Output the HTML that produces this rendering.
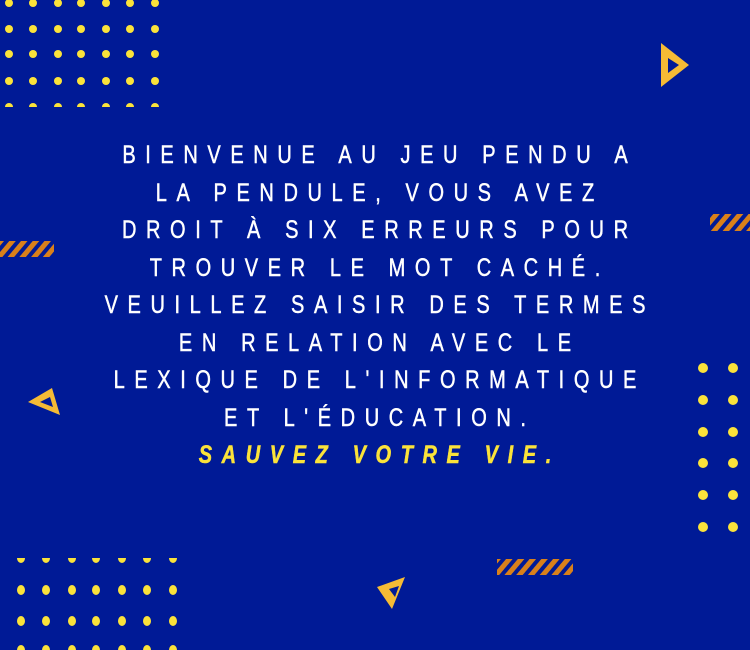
<!DOCTYPE html>
<html><head><meta charset="utf-8"><style>
html,body{margin:0;padding:0}
body{width:750px;height:650px;background:#001a96;position:relative;overflow:hidden}
svg{position:absolute;left:0;top:0}
.t{position:absolute;left:0;width:750px;color:#fff;font-family:"Liberation Sans",sans-serif;font-size:25px;letter-spacing:12px;line-height:37.5px;top:137px;white-space:nowrap;-webkit-text-stroke:0.5px currentColor}
.t div{height:37.5px;text-align:center;padding-left:12px;box-sizing:border-box;width:750px;transform:scaleX(0.8);transform-origin:375px 50%}
.y{color:#fbe33a;font-style:italic;font-weight:bold}
</style></head><body>
<svg width="750" height="650" viewBox="0 0 750 650">
<defs>
<pattern id="st" width="9" height="9" patternUnits="userSpaceOnUse" patternTransform="rotate(40)">
<rect width="9" height="9" fill="#001a96"/><rect width="5" height="9" fill="#d9801a"/>
</pattern>
<clipPath id="c1"><rect x="0" y="0" width="200" height="107"/></clipPath>
<clipPath id="c2"><rect x="0" y="558" width="220" height="100"/></clipPath>
</defs>
<g fill="#fbe33a" clip-path="url(#c1)">
<g id="r1"><circle cx="9" cy="3" r="4"/><circle cx="33" cy="3" r="4"/><circle cx="58" cy="3" r="4"/><circle cx="81" cy="3" r="4"/><circle cx="106" cy="3" r="4"/><circle cx="130" cy="3" r="4"/><circle cx="155" cy="3" r="4"/></g>
<use href="#r1" y="26"/><use href="#r1" y="51"/><use href="#r1" y="78"/><use href="#r1" y="104"/>
</g>
<g fill="#fbe33a" clip-path="url(#c2)">
<g id="r2"><ellipse cx="21" cy="558" rx="4" ry="5"/><ellipse cx="46" cy="558" rx="4" ry="5"/><ellipse cx="72" cy="558" rx="4" ry="5"/><ellipse cx="96" cy="558" rx="4" ry="5"/><ellipse cx="122" cy="558" rx="4" ry="5"/><ellipse cx="147" cy="558" rx="4" ry="5"/><ellipse cx="173" cy="558" rx="4" ry="5"/></g>
<use href="#r2" y="32"/><use href="#r2" y="63"/><use href="#r2" y="92"/>
</g>
<g fill="#fbe33a">
<g id="r3"><circle cx="703" cy="368" r="5"/><circle cx="733" cy="368" r="5"/></g>
<use href="#r3" y="32"/><use href="#r3" y="64"/><use href="#r3" y="95"/><use href="#r3" y="127"/><use href="#r3" y="159"/>
</g>
<g fill="#f5bb35" fill-rule="evenodd">
<path d="M661 43 L689 65 L661 87 Z M668 58 L679 65 L668 73 Z"/>
<path d="M28 402 L52 388 L60 415 Z M40 402 L50 397 L53 407 Z"/>
<path d="M377 587 L405 577 L392 609 Z M389 589 L399 586 L395 597 Z"/>
</g>
<rect x="0" y="241" width="54" height="16" fill="url(#st)"/>
<rect x="710" y="214" width="40" height="17" fill="url(#st)"/>
<rect x="497" y="559" width="76" height="16" fill="url(#st)"/>
</svg>
<div class="t">
<div>BIENVENUE AU JEU PENDU A</div>
<div>LA PENDULE, VOUS AVEZ</div>
<div>DROIT À SIX ERREURS POUR</div>
<div>TROUVER LE MOT CACHÉ.</div>
<div>VEUILLEZ SAISIR DES TERMES</div>
<div>EN RELATION AVEC LE</div>
<div>LEXIQUE DE L'INFORMATIQUE</div>
<div>ET L'ÉDUCATION.</div>
<div class="y">SAUVEZ VOTRE VIE.</div>
</div>
</body></html>
